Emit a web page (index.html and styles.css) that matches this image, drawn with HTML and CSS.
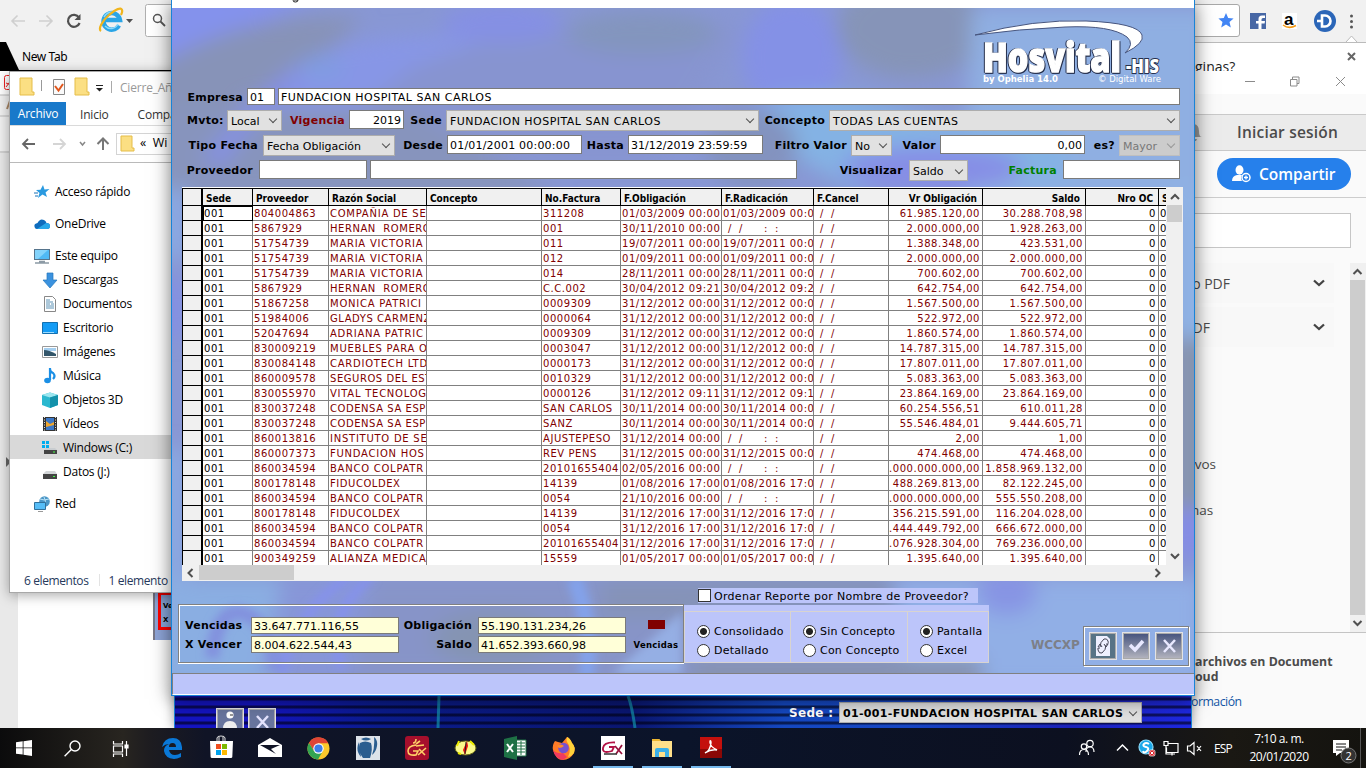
FILE: index.html
```html
<!DOCTYPE html>
<html lang="es">
<head>
<meta charset="utf-8">
<title>Escritorio</title>
<link rel="stylesheet" href="styles.css">
</head>
<body>
<div class="desktop">

  <!-- Browser behind everything -->
  <div class="browser">
    <div class="browser-bar">
      <svg class="nav-icons" width="172" height="42" viewBox="0 0 172 42" fill="none">
        <path d="M25 21H12M17.500 15.500L12 21l5.500 5.500M39 21h13M46.500 15.500L52 21l-5.500 5.500" stroke="#cfcfcf" stroke-width="1.600"/>
        <path d="M79 17.500a6 6 0 1 0 .6 5.500" stroke="#505050" stroke-width="2.200"/><path d="M80.500 14v6h-6z" fill="#505050"/>
        <path d="M119 25.500a8.300 8.300 0 1 1 1-5.500H105" stroke="#2aa5e6" stroke-width="4.500"/>
        <path d="M118 24a8 8 0 0 1-13 2M104 17q3-5 8-5" stroke="#8bd9fa" stroke-width="1.500"/>
        <path d="M101 31c-3-2 1-10 8-16s12-8 13-5c.5 1 0 3-1 5" stroke="#f0b51e" stroke-width="2.200"/>
        <path d="M126 19h7l-3.500 4z" fill="#505050"/>
        <rect x="145.500" y="4.500" width="60" height="32" rx="2" fill="#fff" stroke="#b0b0b0"/>
        <circle cx="157.500" cy="18.500" r="4" stroke="#555" stroke-width="1.500"/><path d="M160.500 21.500l4.500 4.500" stroke="#555" stroke-width="1.800"/>
      </svg>
      <svg class="ext-icons" width="171" height="42" viewBox="0 0 171 42">
        <path d="M-5 4.500H42q2.500 0 2.500 2.500v27q0 2.500-2.500 2.500H-5" fill="#fff" stroke="#a8a8a8"/>
        <path d="M31 13l2.200 5 5.400.5-4.100 3.500 1.300 5.400L31 24.500l-4.800 2.900 1.300-5.400-4.100-3.500 5.400-.5z" fill="#4285f4"/>
        <rect x="55" y="13" width="16" height="16" fill="#4767a5"/><path d="M70 18h-2q-1.500 0-1.500 1.500V21H70l-.4 2.500h-3.100V29H63.500v-5.500H61V21h2.500v-2q0-3.500 3.500-3.500h3z" fill="#fff"/>
        <rect x="87" y="13" width="15" height="16" fill="#fff"/><text x="89" y="25" class="amz">a</text><path d="M88 25q6 4.500 13 .5" stroke="#f59b15" stroke-width="1.500" fill="none"/>
        <circle cx="130" cy="21" r="11" fill="#2b66b8"/><path d="M122 21h6M127 15.500h3a5.500 5.500 0 0 1 0 11h-3z" fill="none" stroke="#fff" stroke-width="2.600"/>
        <circle cx="156.500" cy="16" r="1.500" fill="#555"/><circle cx="156.500" cy="21.500" r="1.500" fill="#555"/><circle cx="156.500" cy="27" r="1.500" fill="#555"/>
        <path d="M151 42l5.500-6 5.500 6" fill="#fff" stroke="#bbb"/>
      </svg>
    </div>
    <div class="tabstrip">
      <svg class="wedge" width="20" height="28" viewBox="0 0 20 28"><path d="M0 0h6l13 28H0z"/></svg>
      <span>New Tab</span>
    </div>
  </div>

  <!-- PDF reader -->
  <div class="reader">
    <div class="reader-left">
      <svg width="12" height="90" viewBox="0 0 12 90"><rect x="4.500" y="4.500" width="12" height="14" rx="2" fill="#fff" stroke="#e22"/><path d="M6 16q4-4 5-9M6 12l5 2" stroke="#e22" fill="none"/><path d="M0 24h12" stroke="#bbb"/><path d="M7 38l4-11" stroke="#a86" stroke-width="2"/><path d="M0 45h12M0 81h12" stroke="#bbb"/></svg>
      <i class="fold"></i>
    </div>
    <div class="reader-right">
      <div class="popup"><span>ginas?</span><svg width="10" height="10" viewBox="0 0 10 10"><path d="M1 1l7 7M8 1L1 8" stroke="#666" stroke-width="2"/></svg></div>
      <div class="caption">
        <svg width="120" height="24" viewBox="0 0 120 24" fill="none" stroke="#8b8b8b"><path d="M1 10.500h10M46.500 8.500v6.500h6.500V8.500zM48.500 8.500V6h6.500v6.500h-2M92 6l9 9M101 6l-9 9"/></svg>
      </div>
      <div class="caption-gap"></div>
      <div class="signin"><svg width="10" height="20" viewBox="0 0 10 20"><path d="M0 2q5 1 5 7t3 6H0zM0 17h3l-1 2H0z" fill="#999"/></svg><span>Iniciar sesión</span></div>
      <div class="share"><button><svg width="20" height="18" viewBox="0 0 20 18"><ellipse cx="7.500" cy="5" rx="4" ry="4.700" fill="#fff"/><path d="M0 16q0-5 5-6h5q-2 3 0 6z" fill="#fff"/><circle cx="14" cy="12.500" r="4" fill="#2680eb" stroke="#fff" stroke-width="1.500"/><path d="M14 10.500v4M12 12.500h4" stroke="#fff" stroke-width="1.300"/></svg><span>Compartir</span></button></div>
      <div class="find"></div>
      <div class="tools">
        <div class="tool-list">
          <div class="tool"><span>o PDF</span><svg width="12" height="8" viewBox="0 0 12 8"><path d="M1 1.500l5 4.500 5-4.500" fill="none" stroke="#444" stroke-width="2.300"/></svg></div>
          <div class="tool second"><span>DF</span><svg width="12" height="8" viewBox="0 0 12 8"><path d="M1 1.500l5 4.500 5-4.500" fill="none" stroke="#444" stroke-width="2.300"/></svg></div>
          <p class="frag first">vos</p><p class="frag">nas</p>
        </div>
        <div class="vbar"><svg width="15" height="17" viewBox="0 0 15 17"><path d="M3.500 11l4-4 4 4" class="arr"/></svg><i></i><svg width="15" height="17" viewBox="0 0 15 17"><path d="M3.500 6l4 4 4-4" class="arr"/></svg></div>
      </div>
      <div class="promo"><b>archivos en Document</b><b>oud</b><a>ormación</a></div>
    </div>
    <div class="stray"><div><b>Ve</b><b>X</b></div></div>
  </div>

  <!-- File explorer -->
  <div class="explorer">
    <div class="ex-title">
      <svg width="100" height="32" viewBox="0 0 100 32"><path d="M10 7h12v14h2v3H10z" fill="#fbdf83" stroke="#e5bd48"/><path d="M31.500 9v11" stroke="#999"/><path d="M43.500 8.500h11v15h-11z" fill="#fafafa" stroke="#888"/><path d="M45 15l3.500 4.500L53 13" fill="none" stroke="#e0561c" stroke-width="2"/><path d="M65 7h12v14h2v3H65z" fill="#fbdf83" stroke="#e5bd48"/><path d="M86 14.500h7" stroke="#222"/><path d="M86 17h7l-3.500 3.500z" fill="#222"/></svg>
      <i></i><span>Cierre_Añ</span>
    </div>
    <div class="ex-tabs"><b>Archivo</b><span>Inicio</span><span class="comp">Compa</span></div>
    <div class="ex-nav">
      <svg width="162" height="37" viewBox="0 0 162 37" fill="none"><path d="M25 18H13M18 13l-5 5 5 5" stroke="#666" stroke-width="1.800"/><path d="M43 18h12M50 13l5 5-5 5" stroke="#d5d5d5" stroke-width="1.800"/><path d="M70 16l2.500 3 2.500-3" stroke="#888" stroke-width="1.500"/><path d="M93 24V13M87.500 18l5.500-5.500 5.500 5.500" stroke="#777" stroke-width="2"/><rect x="106.500" y="7.500" width="90" height="21" stroke="#d4d4d4"/><path d="M111 10h11v12h2v3h-13z" fill="#fbdf83" stroke="#e5bd48"/></svg>
      <span>«&nbsp; Wi</span>
    </div>
    <div class="tree" id="tree"></div>
    <div class="ex-status"><span>6 elementos</span><i></i><span>1 elemento</span></div>
  </div>

  <!-- Parent application, only its bottom strip is visible -->
  <div class="parent-app">
    <svg class="strip-glow" width="1016" height="32" viewBox="0 0 1016 32" fill="none"><path d="M264 0l-1 32M453 0q4 10 7 32" stroke="#149bb0" stroke-width="3" opacity=".65"/></svg>
    <span class="tb"><svg width="24" height="24" viewBox="0 0 24 24"><rect width="24" height="24" fill="#68759e"/><circle cx="12" cy="5" r="3.600" fill="#fff"/><path d="M5 19q0-8 7-8t7 8z" fill="#eee"/><path d="M12 5h3" stroke="#333"/></svg></span>
    <span class="tb"><svg width="24" height="24" viewBox="0 0 24 24"><rect width="24" height="24" fill="#68759e"/><path d="M7 6l11 12M18 6L7 18" stroke="#e4e4ff" stroke-width="2.500"/></svg></span>
    <b>Sede :</b>
    <div class="select strong"><span>01-001-FUNDACION HOSPITAL SAN CARLOS</span><i class="chev"></i></div>
  </div>

  <!-- Hosvital window -->
  <div class="app">
    <div class="app-title"><svg width="140" height="8" viewBox="0 0 140 8"><path d="M121 0h5q0 2-2.500 2T121 .5" fill="none" stroke="#222"/></svg></div>
    <svg class="swirl" width="1022" height="666" viewBox="0 0 1022 666" preserveAspectRatio="none">
      <defs>
        <filter id="soft" x="-30%" y="-30%" width="160%" height="160%"><feGaussianBlur stdDeviation="10"/></filter>
        <filter id="fine" x="-30%" y="-30%" width="160%" height="160%"><feGaussianBlur stdDeviation="4"/></filter>
      </defs>
      <rect width="1022" height="666" fill="#8897d4"/>
      <g filter="url(#soft)">
        <path d="M-20 -20h180L-20 70z" fill="#8492ec"/>
        <path d="M-20 60Q80 0 190 10l-60 60Q40 90-20 190z" fill="#8793b8"/>
        <path d="M120 60q60-40 200-30l-60 70-180 40z" fill="#8796e6"/>
        <path d="M240 60q200-80 330-40l-80 130H130z" fill="#8794d0"/>
        <path d="M-10 100h250l150 90H-10z" fill="#8794bd"/>
        <path d="M30 150q60-70 90-90l10 20q-50 30-80 80z" fill="#8590e4"/>
        <ellipse cx="150" cy="60" rx="24" ry="12" fill="#809be2"/>
        <ellipse cx="330" cy="15" rx="60" ry="20" fill="#8590e4"/>
        <ellipse cx="470" cy="25" rx="75" ry="22" fill="#8395be"/>
        <ellipse cx="620" cy="50" rx="50" ry="60" fill="#8491e6"/>
        <ellipse cx="740" cy="20" rx="75" ry="50" fill="#8694b8"/>
        <path d="M800 0h240v200H790z" fill="#8fafe2"/>
        <path d="M550 110q80-40 180-10t150 0l20 70-220 10z" fill="#84b2e4"/>
        <ellipse cx="580" cy="140" rx="45" ry="40" fill="#8393bf"/>
        <ellipse cx="760" cy="160" rx="90" ry="22" fill="#868ee6"/>
        <path d="M1000 180h40v150h-40z" fill="#8fb2e4"/>
        <path d="M1000 330h40v190h-40z" fill="#8794af"/>
        <path d="M1000 500h40v50h-40z" fill="#858de4"/>
        <path d="M-15 180h30v70h-30zM-15 440h30v130h-30z" fill="#8aa9e2"/>
        <path d="M-15 270h30v60h-30z" fill="#8490e2"/>
        <path d="M-15 570h130v110H-15z" fill="#8aaee2"/>
        <path d="M110 570h100v100H90z" fill="#8796d8"/>
        <path d="M200 570h320v100H180z" fill="#8794c8"/>
        <path d="M430 570h320v40H430z" fill="#8593b8"/>
        <ellipse cx="320" cy="630" rx="60" ry="26" fill="#8594b2"/>
        <path d="M720 570h310v110H740z" fill="#91afe6"/>
        <ellipse cx="835" cy="585" rx="30" ry="22" fill="#8794e4"/>
        <path d="M520 650h290v30H520z" fill="#8693b0"/>
      </g>
      <g filter="url(#fine)" fill="none">
        <path d="M110 666q10-60 70-100M170 660q-20-50 30-92" stroke="#8591ee" stroke-width="8"/>
        <path d="M402 570q20 50 12 100" stroke="#83a2ea" stroke-width="16"/>
        <path d="M40 650q5-50 30-45t35 55" stroke="#8291de" stroke-width="14"/>
        <path d="M440 666l70-62v62z" fill="#95afe4"/>
      </g>
    </svg>
    <div class="app-body">
      <div class="brand">
        <svg width="196" height="72" viewBox="0 0 196 72">
          <path d="M1 22Q60 6 112 8t56 14q3 8-17 18 10-9 2-16-16-12-62-10T1 22z" fill="#fff" stroke="#47557e" stroke-width="1"/>
          <text x="9" y="59" class="logo" textLength="138" lengthAdjust="spacingAndGlyphs">Hosvital</text>
          <text x="152" y="60" class="his" textLength="33" lengthAdjust="spacingAndGlyphs">-HIS</text>
          <text x="9" y="69" class="tiny" textLength="75" lengthAdjust="spacingAndGlyphs">by Ophelia 14.0</text>
          <text x="124" y="69" class="tiny thin" textLength="63" lengthAdjust="spacingAndGlyphs">© Digital Ware</text>
        </svg>
      </div>
      <div class="row r1"><label>Empresa</label><div class="in">01</div><div class="in up">FUNDACION HOSPITAL SAN CARLOS</div></div>
      <div class="row r2"><label>Mvto:</label><div class="select"><span>Local</span><i class="chev"></i></div><label class="red">Vigencia</label><div class="in num">2019</div><label>Sede</label><div class="select up"><span>FUNDACION HOSPITAL SAN CARLOS</span><i class="chev"></i></div><label>Concepto</label><div class="select up"><span>TODAS LAS CUENTAS</span><i class="chev"></i></div></div>
      <div class="row r3"><label>Tipo Fecha</label><div class="select"><span>Fecha Obligación</span><i class="chev"></i></div><label>Desde</label><div class="in date">01/01/2001 00:00:00</div><label>Hasta</label><div class="in">31/12/2019 23:59:59</div><label>Filtro Valor</label><div class="select"><span>No</span><i class="chev"></i></div><label>Valor</label><div class="in num">0,00</div><label>es?</label><div class="select off"><span>Mayor</span><i class="chev"></i></div></div>
      <div class="row r4"><label>Proveedor</label><div class="in"></div><div class="in"></div><label>Visualizar</label><div class="select"><span>Saldo</span><i class="chev"></i></div><label class="green">Factura</label><div class="in"></div></div>

      <div class="gridbox">
        <div class="grid-main">
          <div class="sheet" id="sheet"></div>
          <div class="vscroll"><svg width="16" height="17" viewBox="0 0 16 17"><path d="M4 11l4-4 4 4" class="arr"/></svg><i></i><svg width="16" height="17" viewBox="0 0 16 17"><path d="M4 6l4 4 4-4" class="arr"/></svg></div>
        </div>
        <div class="hscroll"><svg width="17" height="16" viewBox="0 0 17 16"><path d="M10.500 4l-4 4 4 4" class="arr"/></svg><i></i><svg width="17" height="16" viewBox="0 0 17 16"><path d="M6.500 4l4 4-4 4" class="arr"/></svg></div>
      </div>

      <div class="check"><i></i><span>Ordenar Reporte por Nombre de Proveedor?</span></div>
      <div class="foot">
        <div class="totals">
          <label>Vencidas</label><div class="in">33.647.771.116,55</div><label class="r">Obligación</label><div class="in">55.190.131.234,26</div><i class="swatch"></i>
          <label>X Vencer</label><div class="in">8.004.622.544,43</div><label class="r">Saldo</label><div class="in">41.652.393.660,98</div><small>Vencidas</small>
        </div>
        <div class="opts">
          <div><span><i class="on"></i>Consolidado</span><span><i></i>Detallado</span></div>
          <div><span><i class="on"></i>Sin Concepto</span><span><i></i>Con Concepto</span></div>
          <div><span><i class="on"></i>Pantalla</span><span><i></i>Excel</span></div>
        </div>
        <b class="code">WCCXP</b>
        <div class="actions">
          <span class="tb"><svg width="24" height="24" viewBox="0 0 24 24"><rect width="24" height="24" fill="#577386"/><path d="M5 2h11l3 3v17H5z" fill="#eef0ff"/><path d="M9 14q-3-1-2 2 1 4 4 3 4-3 4-8M15 10q3 1 2-3-1-3-4-2-4 3-4 8M7 13l2-3 2 3M13 10l2 3 2-3" fill="none" stroke="#445"/></svg></span>
          <span class="tb"><svg width="24" height="24" viewBox="0 0 24 24"><defs><linearGradient id="g" x2="0" y2="1"><stop offset="0" stop-color="#48557f"/><stop offset="1" stop-color="#b1b2bd"/></linearGradient></defs><rect width="24" height="24" fill="url(#g)"/><path d="M6 11l5 5 8-9" fill="none" stroke="#e8e8ff" stroke-width="3.500"/></svg></span>
          <span class="tb"><svg width="24" height="24" viewBox="0 0 24 24"><rect width="24" height="24" fill="url(#g)"/><path d="M7 6l11 12M18 6L7 18" stroke="#e8e8ff" stroke-width="2.500"/></svg></span>
        </div>
      </div>
      <div class="statusbar"></div>
    </div>
  </div>

  <!-- Taskbar -->
  <div class="taskbar">
    <div class="launch">
      <span class="w48"><svg width="16" height="16" viewBox="0 0 16 16" fill="#fff"><path d="M0 2.300l6.700-1v6.200H0zM7.500 1.200L16 0v7.500H7.500zM0 8.300h6.700v6.300L0 13.700zM7.500 8.300H16V16l-8.500-1.200z"/></svg></span>
      <span class="w48"><svg width="17" height="17" viewBox="0 0 17 17" fill="none" stroke="#fff" stroke-width="1.400"><circle cx="11" cy="6" r="5"/><path d="M7.300 9.500L.6 16.300"/></svg></span>
      <span class="w48 gap"><svg width="17" height="17" viewBox="0 0 17 17" fill="none" stroke="#fff" stroke-width="1.200"><path d="M1.500 1v3h9V1M1.500 6h9v6h-9zM1.500 17v-3h9v3M14.500 1v15"/><path d="M13 5h3v3h-3z" fill="#fff"/></svg></span>
      <span><svg width="22" height="22" viewBox="0 0 22 22"><path d="M1 10Q3 1 12 1q8 0 9 9v3H8q1 5 6 5 3 0 6-2v4q-4 2-7 2-9-1-10-8-.3-5 5-7-4 0-7 3zm7 0h7q0-4-3.500-4T8 10z" fill="#0a78d7"/></svg></span>
      <span class="up1"><svg width="24" height="24" viewBox="0 0 24 24"><path d="M8 7V3q0-2 4-2t4 2v4M10 6V2M14 6V2" fill="none" stroke="#ddd"/><path d="M1 6h23l-.7 16q0 1-1.500 1H3q-1.300 0-1.400-1z" fill="#fff"/><path d="M7 9h5v5H7z" fill="#f04e1f"/><path d="M13 9h5v5h-5z" fill="#7cb900"/><path d="M7 15h5v5H7z" fill="#00a3ee"/><path d="M13 15h5v5h-5z" fill="#fdb800"/></svg></span>
      <span><svg width="24" height="20" viewBox="0 0 24 20"><path d="M0 7l12-7 12 7v12H0z" fill="#fff"/><path d="M2 7h20l-9 4 5 5L2 7z" fill="#101426"/></svg></span>
      <span><svg width="23" height="23" viewBox="0 0 23 23"><circle cx="11.500" cy="11.500" r="11" fill="#fbc92c"/><path d="M1.900 6A11 11 0 0 1 21.300 6.200L11.500 6.300 7 14z" fill="#e04435"/><path d="M1.900 6A11 11 0 0 0 11 22.500l4.800-8.500H7z" fill="#33a452"/><circle cx="11.500" cy="11.500" r="5.200" fill="#fff"/><circle cx="11.500" cy="11.500" r="4.100" fill="#3e7de8"/></svg></span>
      <span><svg width="24" height="24" viewBox="0 0 24 24"><path d="M0 0h24v24H0z" fill="#dde3ea"/><path d="M4 7q5-3 11 0 2 6-1 15H7Q1 15 4 7z" fill="#2b5d8f"/><path d="M5 3q5-3 10 0-5 3-10 0M18 1q4 3 3 9t-5 9q3-8 2-18M3 6Q-1 14 5 21" fill="#2b5d8f"/></svg></span>
      <span><svg width="24" height="24" viewBox="0 0 24 24"><rect width="24" height="24" rx="3" fill="#a60f2c"/><path d="M11 9q-8 1-8 6t8 4l2-4H8M14 13l6 6M21 12l-8 7M8 7q3 0 3-4M11 8l4-3M11 10l8-1" fill="none" stroke="#ffd067" stroke-width="1.600"/></svg></span>
      <span><svg width="23" height="20" viewBox="0 0 23 20"><ellipse cx="11.500" cy="10" rx="10.500" ry="7" fill="#fafa8b" stroke="#686818"/><path d="M5 3L3 8M16 3l4 4M4 15l3 1" stroke="#ecec00" stroke-width="2"/><path d="M13 3l1 5-3 9-2-5z" fill="#e11"/><path d="M12 4l-1 12" stroke="#222"/></svg></span>
      <span><svg width="24" height="24" viewBox="0 0 24 24"><path d="M11 4h12v16H11z" fill="#fff" stroke="#1e7145"/><path d="M14 7h8M14 10h8M14 13h8M14 16h8M18 5v14" stroke="#1e7145"/><path d="M1 3l13-3v24L1 21z" fill="#1e7145"/><path d="M4 8l6 8M10 8l-6 8" stroke="#fff" stroke-width="2"/></svg></span>
      <span><svg width="24" height="24" viewBox="0 0 24 24"><path d="M3 5l3 1 4 1 5-6q3 1 5 6 4 4 2 10-4 7-11 7T1 14Q0 9 3 5z" fill="#ff7b27"/><path d="M15 1q3 1 5 6 4 4 2 10-2 3-6 4 4-9-1-15-1-2 0-5z" fill="#ffd23a"/><path d="M1 14q4 4 10 3l4 4-4 3Q3 23 1 14z" fill="#f23a5e"/><circle cx="11.500" cy="12" r="5.300" fill="#7651cf"/><path d="M5 10q4-3 7 0-2 2-5 2z" fill="#ff8a27"/></svg></span>
      <span class="run"><svg width="24" height="24" viewBox="0 0 24 24"><rect width="24" height="24" fill="#fff"/><path d="M14 6.500Q3 6 2 12t9 3l2-4H8" fill="none" stroke="#b21245" stroke-width="1.800"/><path d="M14 10l7 8M21 9l-6 9" stroke="#97123d" stroke-width="1.700"/><path d="M3 18h13" stroke="#333" stroke-width="1.500"/></svg></span>
      <span class="run"><svg width="22" height="20" viewBox="0 0 22 20"><path d="M1 1h7l2 2h11v16H1z" fill="#ffe08a"/><path d="M1 1h7l2 2H1z" fill="#edb62f"/><path d="M4 19v-7q0-2 2-2h10q2 0 2 2v7h-4v-5H8v5z" fill="#3cb0e8"/></svg></span>
      <span class="run up1"><svg width="22" height="21" viewBox="0 0 22 21"><path d="M0 0h22v21H0z" fill="#c4100d"/><path d="M0 12h22v9H0z" fill="#8b0806"/><path d="M5 16q5-2 6-10 0-3-1-2-1 5 7 9-6-1-12 3" fill="none" stroke="#fff" stroke-width="1.400"/></svg></span>
    </div>
    <div class="tray">
      <svg width="132" height="40" viewBox="3 0 132 40" fill="none" stroke="#fff" stroke-width="1.200"><circle cx="20" cy="15.500" r="3.200"/><path d="M16 24q0-5 4-5t4 5"/><circle cx="14" cy="18.500" r="2.700" fill="#0d1020"/><path d="M9.500 27q0-5.500 4.500-5.500t4.500 5.500"/><path d="M47 22.500l5.500-5.500 5.500 5.500" stroke-width="1.500"/><circle cx="76" cy="19" r="7" fill="#1aa8ea" stroke="#8cdcfc"/><path d="M79 16q-3-2-5 0t2 3 1 4-4 0" stroke-width="2"/><rect x="79" y="22" width="6" height="6" rx="1.500" fill="#d9242b" stroke="#fff" stroke-width=".7"/><path d="M80.500 23.500l3 3M83.500 23.500l-3 3" stroke-width="1"/><path d="M98 15.500h10v9H96.500v-5M94 13.500h4v4h-4zM96 18v8h9M102 25v2.500"/><path d="M117.500 18v5h2.500l4 3.500v-12L120 18zM127 18l4 5M131 18l-4 5"/></svg>
      <span class="lang">ESP</span>
      <div class="clock"><span>7:10 a. m.</span><span>20/01/2020</span></div>
      <svg width="28" height="40" viewBox="0 0 28 40"><path d="M3 12h16v13H10l-4 3v-3H3z" fill="#fff"/><path d="M6 16h10M6 19h10M6 22h6" stroke="#111"/><circle cx="18.500" cy="27.500" r="7.500" fill="#333" stroke="#777"/><text x="15.500" y="31.500" class="badge">2</text></svg>
      <i class="peek"></i>
    </div>
  </div>
</div>
<script src="app.js"></script>
</body>
</html>
```

FILE: styles.css
```css
* { box-sizing: border-box; }
body { margin: 0; font-family: "DejaVu Sans", sans-serif; font-size: 11px; color: #000; overflow: hidden; }
.desktop { position: relative; width: 1366px; height: 768px; overflow: hidden; background: #fff; }
svg { display: block; flex: none; }
.arr { fill: none; stroke: #505050; stroke-width: 2; }

/* browser */
.browser { position: absolute; left: 0; top: 0; width: 1366px; height: 71px; background: #f1f1f1; border-bottom: 1px solid #000; }
.browser-bar { display: flex; justify-content: space-between; height: 42px; }
.amz { font: bold 17px "Liberation Sans", sans-serif; }
.tabstrip { display: flex; height: 28px; align-items: center; font: 12px "Noto Sans", sans-serif; gap: 2px; }
.tabstrip span { padding-top: 1px; letter-spacing: -.4px; }

/* reader */
.reader { position: absolute; left: 0; top: 71px; width: 1366px; height: 657px; display: flex; justify-content: space-between; background: #fff; }
.reader-left { width: 18px; background: linear-gradient(#fff 0 24px, #f1f1f1 24px 80px, #e9e9e9 80px); display: flex; flex-direction: column; }
.fold { border: 5px solid transparent; border-left-color: #666; width: 0; margin: 296px 0 0 6px; }
.reader-right { width: 175px; background: #fafafa; margin-top: -29px; display: flex; flex-direction: column; font-family: "Open Sans", sans-serif; color: #4b4b4b; }
.popup { height: 29px; background: #fff; border-top: 1px solid #bbb; display: flex; justify-content: space-between; padding: 9px 9px 0 4px; overflow: hidden; color: #222; font-size: 14px; line-height: 32px; }
.popup span { margin-top: -1px; }
.caption { height: 23px; background: #fff; display: flex; padding-left: 53px; }
.caption svg { overflow: visible; }
.caption-gap { height: 20px; }
.signin { height: 37px; border: solid #c9c9c9; border-width: 1px 0; background: #ebebeb; display: flex; align-items: center; gap: 33px; padding: 0 0 1px 3px; font-size: 15.5px; font-weight: 600; letter-spacing: .2px; }
.share { height: 47px; border-bottom: 1px solid #cdcdcd; padding: 7px 0 0 26px; }
.share button { width: 134px; height: 32px; border: 0; border-radius: 16px; background: #2680eb; color: #fff; font: 600 15.5px "Open Sans", sans-serif; display: flex; align-items: center; gap: 7px; padding: 0 0 1px 15px; }
.find { height: 35px; width: 160px; margin: 15px 0; border: 1px solid #c6c6c6; background: #fff; }
.tools { height: 370px; display: flex; justify-content: space-between; border-bottom: 1px solid #c4c4c4; }
.tool-list { width: 143px; }
.tool { height: 40px; background: #f8f8f8; display: flex; align-items: center; justify-content: space-between; padding: 0 9px 0 0; font-size: 14px; }
.tool span { width: 39px; text-align: right; }
.tool.second { margin-top: 4px; } .tool.second span { width: 19px; }
.frag { margin: 26px 0 0; width: 25px; text-align: right; font-size: 13.500px; line-height: 20px; }
.frag:last-child { width: 21px; }
.frag.first { margin-top: 107px; }
.vbar { width: 16px; background: #f0f0f0; display: flex; flex-direction: column; justify-content: space-between; }
.vbar i { flex: 1; background: #cdcdcd; width: 15px; }
.promo { display: flex; flex-direction: column; font-size: 12.300px; line-height: 15px; padding: 21px 0 0 4px; letter-spacing: 0; }
.promo a { color: #1355a5; margin: 10px 0 0 -4px; letter-spacing: -.5px; }
.promo b { white-space: nowrap; font-weight: 700; }
.stray { position: absolute; left: 153px; top: 515px; width: 30px; height: 54px; background: #8ea5d8; border-left: 2px solid #778; padding: 6px 0 6px 3px; }
.stray div { height: 38px; border: 3px solid #f00; background: #88a7dc; font-size: 7px; line-height: 14px; padding: 4px 0 0 2px; }
.stray b { display: block; }

/* explorer */
.explorer { position: absolute; left: 9px; top: 71px; width: 400px; height: 522px; background: #fff; border: 1px solid #a8a8a8; box-shadow: 0 2px 12px rgba(0,0,0,.35); font-family: "Open Sans", sans-serif; font-size: 12px; display: flex; flex-direction: column; }
.ex-title { height: 30px; display: flex; align-items: center; color: #999; }
.ex-title i { width: 1px; height: 12px; background: #aaa; margin-left: 1px; }
.ex-title span { margin-left: 8px; letter-spacing: -.2px; }
.ex-tabs { height: 24px; display: flex; align-items: center; border-bottom: 1px solid #dadada; color: #333; letter-spacing: -.2px; }
.ex-tabs b { width: 56px; height: 23px; background: #1979ca; color: #fff; font-weight: 400; line-height: 24px; text-align: center; }
.ex-tabs span { margin-left: 14px; padding-top: 1px; } .ex-tabs .comp { margin-left: 29px; }
.ex-nav { height: 37px; display: flex; align-items: center; position: relative; border-bottom: 1px solid #bababa; }
.ex-nav span { position: absolute; left: 130px; top: 8px; font-size: 12.500px; }
.tree { padding-top: 17px; height: 398px; }
.tree div { height: 24px; display: flex; align-items: center; gap: 5px; padding: 0 0 1px 32px; letter-spacing: -.25px; }
.tree .top { padding-left: 24px; margin-bottom: 8px; }
.tree .flush { margin-bottom: 0; } .tree .last { margin-top: 8px; }
.tree .sel { background: #d9d9d9; margin-top: -1px; height: 24px; padding-bottom: 0; margin-bottom: 1px; }
.ex-status { height: 30px; display: flex; align-items: center; padding: 8px 0 0 14px; color: #26395c; letter-spacing: -.4px; font-size: 12px; }
.ex-status i { width: 1px; height: 12px; background: #e3e3e3; margin: 0 9px 0 10px; }

/* parent app strip */
.parent-app { position: absolute; left: 174px; top: 690px; width: 1018px; height: 38px; border: solid #1883d7; border-width: 0 1px; background: repeating-linear-gradient(rgba(0,0,15,.6) 0 2px, transparent 3px 7px, rgba(0,0,15,.6) 8px), linear-gradient(90deg, #1414c0 0 8%, #0b1c8c 20%, #0a1670 45%, #1548c0 60%, #1646c4 72%, #1b22b8 88%, #1e28e0); display: flex; padding: 12px 0 0 41px; color: #fff; box-shadow: 0 0 12px rgba(0,0,0,.4); }
.strip-glow { position: absolute; left: 0; top: 6px; }
.tb { width: 28px; height: 28px; border: 2px solid #e2e2e6; outline: 1px solid #aaa; outline-offset: -2px; flex: none; }
.parent-app .tb { margin: 6px 4px 0 0; position: relative; }
.parent-app b { font-size: 12px; margin: 4px 0 0 509px; width: 50px; letter-spacing: .3px; }
.select.strong { width: 303px; height: 21px; font-weight: bold; color: #000; font-size: 11px; letter-spacing: .33px; }

/* application */
.app { position: absolute; left: 171px; top: 0; width: 1024px; height: 696px; border: 1px solid #1883d7; border-top: 0; box-shadow: 0 3px 18px rgba(0,0,0,.55); background: #8897d4; }
.app-title { height: 8px; background: #fff; }
.swirl { position: absolute; left: 0; top: 8px; }
.app-body { position: relative; display: flex; flex-direction: column; height: 687px; }
.brand { height: 80px; display: flex; justify-content: flex-end; padding: 5px 24px 0 0; }
.logo { font: 800 41px "Open Sans", "DejaVu Sans", sans-serif; fill: #fff; stroke: #fff; stroke-width: 1.5; filter: drop-shadow(1px 1px 0 #26304d) drop-shadow(-1px 0 0 #26304d); }
.his { font: 800 20px "Open Sans", sans-serif; fill: #fff; stroke: #26304d; stroke-width: 2; paint-order: stroke; }
.tiny { font: bold 8px "DejaVu Sans", sans-serif; fill: #fff; } .tiny.thin { font-weight: 400; }

.row { display: grid; align-items: start; width: 1008px; }
.row label { text-align: right; padding-right: 4px; white-space: nowrap; }
label { font-weight: bold; font-size: 11px; letter-spacing: .26px; }
.r1 { grid-template-columns: 60px 28px 905px; height: 22px; padding-left: 15px; }
.r1 .in { height: 17px; line-height: 17px; } .r1 .in:last-child { margin-left: 3px; width: 902px; }
.row.r1 label { line-height: 19px; }
.r2 { grid-template-columns: 40px 55px 67px 55px 42px 313px 70px 351px; height: 25px; padding-left: 15px; }
.r3 { grid-template-columns: 76px 132px 52px 135px 46px 135px 88px 41px 48px 145px 34px 61px; height: 26px; padding-left: 15px; }
.r4 { grid-template-columns: 74px 108px 430px 112px 59px 95px 117px; height: 27px; padding-left: 13px; }
.r4 .in:nth-child(3) { margin-left: 3px; }
.row.r2 label, .row.r3 label { line-height: 21px; }
.row.r4 label { line-height: 22px; padding-right: 6px; }
.row.r2 label:first-child, .row.r3 label:first-child { padding-right: 5px; }
.in { height: 19px; background: #fff; border: 1px solid #7a7a7a; padding: 0 2px; line-height: 19px; white-space: nowrap; overflow: hidden; font-size: 11px; }
.date { letter-spacing: .2px; }
.up { letter-spacing: .48px; }
.num { text-align: right; }
.select { height: 21px; background: #e1e1e1; border: 1px solid #adadad; display: flex; align-items: center; justify-content: space-between; padding: 2px 5px 0 3px; white-space: nowrap; }
.chev { width: 6px; height: 6px; border: solid #505050; border-width: 0 1px 1px 0; transform: translateY(-2px) rotate(45deg); flex: none; }
.off { background: #ccc; border-color: #bfbfbf; color: #787878; } .off .chev { border-color: #999; }
.red { color: #800000; } .green { color: #008000; }

.gridbox { width: 1001px; margin-left: 10px; height: 394px; background: #f0f0f0; }
.grid-main { display: flex; justify-content: space-between; height: 378px; }
.sheet { width: 984px; height: 378px; overflow: hidden; background: #fff; border-top: 1px solid #fff; }
.tr { display: grid; grid-template-columns: 21px 50px 76px 98px 115px 79px 101px 92px 75px 94px 103px 73px 8px; height: 15px; color: #800000; font-size: 10px; letter-spacing: .55px; line-height: 15px; }
.tr div { border-right: 1px solid #808080; border-bottom: 1px solid #808080; padding-left: 1px; white-space: pre; overflow: hidden; }
.tr div:first-child { background: #f0f0f0; border: solid #000; border-width: 0 2px 1px 1px; }
.tr div.k { color: #000; }
.tr div.name { letter-spacing: .75px; }
.tr div.nil { word-spacing: 3.300px; padding-left: 6px; }
.tr div.n { display: flex; justify-content: flex-end; padding-right: 2px; }
.tr div:last-child { border-right: 0; }
.tr div.focus { border: 1px solid #000; outline: 1px solid #000; outline-offset: -1px; line-height: 13px; padding-left: 0; }
.tr.th { height: 18px; color: #000; font: bold 10px/19px "DejaVu Sans Condensed", "DejaVu Sans", sans-serif; letter-spacing: 0; border-top: 1px solid #000; }
.tr.th div { background: #f0f0f0; border-color: #000; border-bottom-width: 1px; padding-left: 3px; }
.tr.th div.n { padding-right: 5px; }
.vscroll { width: 16px; display: flex; flex-direction: column; padding-top: 1px; }
.vscroll i { height: 17px; width: 15px; background: #cdcdcd; margin-bottom: auto; }
.hscroll { display: flex; height: 16px; }
.hscroll i { width: 95px; height: 15px; background: #cdcdcd; margin-right: auto; }
.hscroll svg:last-child { margin-right: 17px; }

.check { width: 280px; height: 15px; margin: 7px 0 0 526px; background: #bcc5fa; display: flex; gap: 3px; line-height: 18px; letter-spacing: .3px; }
.check i { width: 13px; height: 13px; margin-top: 1px; background: #fff; border: 1px solid #333; }
.foot { display: flex; margin: 1px 0 0 6px; height: 69px; }
.totals { width: 506px; height: 59px; border: 1px solid #808080; box-shadow: inset 1px 1px #fff, 0 1px #fff; display: grid; grid-template-columns: 66px 148px 79px 148px 59px; grid-auto-rows: 19px; align-content: start; padding: 12px 0 0 6px; }
.totals .in { height: 17px; background: #ffffd8; line-height: 17px; }
.totals label { line-height: 18px; }
.r { text-align: right; padding-right: 6px; }
.swatch { width: 17px; height: 9px; background: #800000; margin: 3px 0 0 22px; }
.totals small { font-size: 8.500px; font-weight: bold; text-align: center; line-height: 18px; padding-left: 1px; letter-spacing: .25px; }
.opts { width: 305px; height: 58px; margin-top: 1px; background: #bcc5fa; padding-top: 6px; display: grid; grid-template-columns: 107px 117px 81px; letter-spacing: .2px; }
.opts div { border: 1px solid #d8d4d0; border-left-width: 0; padding: 10px 0 0 12px; }
.opts div:first-child { border-left-width: 1px; }
.opts span { display: flex; align-items: center; gap: 4px; height: 19px; white-space: nowrap; line-height: 19px; }
.opts i { width: 13px; height: 13px; border-radius: 50%; border: 1px solid #333; background: #fff; flex: none; }
.opts i.on { background: radial-gradient(circle, #222 0 3px, #fff 4px); }
.code { color: #7c7f88; font-size: 12px; margin: 34px 2px 0 42px; width: 50px; }
.actions { width: 106px; height: 40px; margin-top: 22px; border: 1px solid #808080; box-shadow: inset 1px 1px #fff, 1px 1px #fff; display: flex; gap: 5px; padding: 5px; }
.statusbar { height: 22px; background: #bcc5fa; border: solid #808080; border-width: 1px 0 0 1px; border-bottom: 1px solid #fff; }

/* taskbar */
.taskbar { position: absolute; left: 0; top: 728px; width: 1366px; height: 40px; background: linear-gradient(90deg, #0b0b0c, #282520 9%, #1d1c20 11%, #101426 15%, #0b142a 50%, #0c1020 78%, #1a1813 90%, #14130f); display: flex; justify-content: space-between; color: #fff; font: 12px "Open Sans", sans-serif; }
.launch, .tray { display: flex; }
.launch span { width: 49px; height: 40px; display: flex; align-items: center; justify-content: center; }
.launch .up1 { padding-bottom: 2px; }
.launch .w48 { width: 48px; } .launch .gap { margin-right: 3px; }
.launch .run { background: linear-gradient(#76b9ed, #76b9ed) 50% 100% / 40px 2px no-repeat; }
.tray { width: 293px; align-items: center; }
.lang { width: 30px; padding-left: 9px; font-size: 12px; letter-spacing: -.9px; }
.clock { width: 82px; margin-left: 2px; text-align: center; display: flex; flex-direction: column; line-height: 18px; font-size: 12px; letter-spacing: -.45px; padding-left: 2px; padding-bottom: 1px; }
.clock span { white-space: nowrap; }
.tray .clock + svg { margin-left: 11px; }
.badge { font: 11px "Open Sans", sans-serif; fill: #fff; }
.peek { width: 1px; height: 40px; background: #555; margin-left: 2px; }
```

FILE: app.js
```js
const head = ["", "Sede", "Proveedor", "Razón Social", "Concepto", "No.Factura", "F.Obligación", "F.Radicación", "F.Cancel", "Vr Obligación", "Saldo", "Nro OC", "S"];
const rows = `804004863|COMPAÑIA DE SE|311208|01/03/2009 00:00|01/03/2009 00:0|61.985.120,00|30.288.708,98
5867929|HERNAN  ROMERO|001|30/11/2010 00:00||2.000.000,00|1.928.263,00
51754739|MARIA VICTORIA|011|19/07/2011 00:00|19/07/2011 00:0|1.388.348,00|423.531,00
51754739|MARIA VICTORIA|012|01/09/2011 00:00|01/09/2011 00:0|2.000.000,00|2.000.000,00
51754739|MARIA VICTORIA|014|28/11/2011 00:00|28/11/2011 00:0|700.602,00|700.602,00
5867929|HERNAN  ROMERO|C.C.002|30/04/2012 09:21|30/04/2012 09:2|642.754,00|642.754,00
51867258|MONICA PATRICI|0009309|31/12/2012 00:00|31/12/2012 00:0|1.567.500,00|1.567.500,00
51984006|GLADYS CARMENZ|0000064|31/12/2012 00:00|31/12/2012 00:0|522.972,00|522.972,00
52047694|ADRIANA PATRIC|0009309|31/12/2012 00:00|31/12/2012 00:0|1.860.574,00|1.860.574,00
830009219|MUEBLES PARA O|0003047|31/12/2012 00:00|31/12/2012 00:0|14.787.315,00|14.787.315,00
830084148|CARDIOTECH LTD|0000173|31/12/2012 00:00|31/12/2012 00:0|17.807.011,00|17.807.011,00
860009578|SEGUROS DEL EST|0010329|31/12/2012 00:00|31/12/2012 00:0|5.083.363,00|5.083.363,00
830055970|VITAL TECNOLOG|0000126|31/12/2012 09:11|31/12/2012 09:1|23.864.169,00|23.864.169,00
830037248|CODENSA SA ESP|SAN CARLOS|30/11/2014 00:00|30/11/2014 00:0|60.254.556,51|610.011,28
830037248|CODENSA SA ESP|SANZ|30/11/2014 00:00|30/11/2014 00:0|55.546.484,01|9.444.605,71
860013816|INSTITUTO DE SE|AJUSTEPESO|31/12/2014 00:00||2,00|1,00
860007373|FUNDACION HOS|REV PENS|31/12/2015 00:00|31/12/2015 00:0|474.468,00|474.468,00
860034594|BANCO COLPATR|20101655404|02/05/2016 00:00||5.000.000.000,00|1.858.969.132,00
800178148|FIDUCOLDEX|14139|01/08/2016 17:00|01/08/2016 17:0|488.269.813,00|82.122.245,00
860034594|BANCO COLPATR|0054|21/10/2016 00:00||3.000.000.000,00|555.550.208,00
800178148|FIDUCOLDEX|14139|31/12/2016 17:00|31/12/2016 17:0|356.215.591,00|116.204.028,00
860034594|BANCO COLPATR|0054|31/12/2016 17:00|31/12/2016 17:0|2.444.449.792,00|666.672.000,00
860034594|BANCO COLPATR|20101655404|31/12/2016 17:00|31/12/2016 17:0|3.076.928.304,00|769.236.000,00
900349259|ALIANZA MEDICA|15559|01/05/2017 00:00|01/05/2017 00:0|1.395.640,00|1.395.640,00`.split("\n").map(r => r.split("|"));

const tight = /^(FIDUC|CODENSA|HERNAN|GLADYS|SEGUROS)/;
const cell = (t, c = "") => `<div class="${c}">${t}</div>`;
let html = '<div class="tr th">' + head.map((t, i) => cell(t, i > 8 && i < 12 ? "n" : "")).join("") + "</div>";
rows.forEach((r, i) => {
  html += '<div class="tr">' + cell("") + cell("001", i ? "k" : "k focus") + cell(r[0]) + cell(r[1], tight.test(r[1]) ? "" : "name") + cell("") + cell(r[2]) + cell(r[3]) +
    (r[4] ? cell(r[4]) : cell("/ /   : :", "nil")) + cell("/ /", "nil") + cell(r[5], "n") + cell(r[6], "n") + cell("0", "n k") + cell(i === rows.length - 1 ? "" : "0", "k") + "</div>";
});
document.getElementById("sheet").innerHTML = html;

const icons = {
  star: '<path d="M9 1l1.500 4.500 5-.5-4 3.500L13 13 8.500 10.500 4 14l1.500-5L2 6l4.500-.3z" fill="#2a9ae0"/><path d="M0 9h4M1 12h3" stroke="#1671b8"/>',
  cloud: '<path d="M1 12q-2-4 2.500-5Q6 2 10 4q2 1 2.500 3Q16 7 16 10t-3 3H3q-1.500 0-2-1z" fill="#0f6cbd"/><path d="M3 13l9-6q4 0 4 3t-3 3z" fill="#28a8ea"/>',
  pc: '<rect x=".5" y="1.500" width="15" height="10" fill="#4fb9f5" stroke="#56748c"/><path d="M1 2h13L4 11H1z" fill="#83d3fb"/><path d="M5 13.500h6M1 15h14" stroke="#8c9aa5" stroke-width="1.300"/>',
  down: '<path d="M5 1h6v7h4l-7 8-7-8h4z" fill="#3b92df" stroke="#2377bb" stroke-width=".7"/>',
  doc: '<path d="M2.500.5h8l3 3v12h-11z" fill="#fff" stroke="#888"/><path d="M4 4h4M4 6h7M9 8h3M4 8h4M4 10h8M4 12h8" stroke="#5c92b5"/>',
  desk: '<path d="M.5 2.500h15v11H.5z" fill="#159cf5" stroke="#1370b0"/><path d="M1 12.500h11" stroke="#9bdcff"/>',
  img: '<path d="M.5 2.500h15v11H.5z" fill="#fff" stroke="#999"/><path d="M2 4h12v3H2z" fill="#a5cff0"/><path d="M2 6q5 0 12 4v2H2z" fill="#33566a"/>',
  music: '<path d="M8 0v12M8 1q0 3 3 4 3 3 0 6" fill="none" stroke="#1b8fe5" stroke-width="2.200"/><ellipse cx="5.500" cy="12.500" rx="3.300" ry="2.800" fill="#1b8fe5"/>',
  cube: '<path d="M0 3l8-2.500L16 3v10l-8 3-8-3z" fill="#2bb8cf"/><path d="M0 3l8-2.500L16 3 8 5.500z" fill="#9ce6ef"/><path d="M8 5.500L16 3v10l-8 3z" fill="#1391aa"/>',
  film: '<path d="M1 1h14v14H1z" fill="#333"/><path d="M4 2h8v12H4z" fill="#3b78c8"/><path d="M4 5l4 3 4-2v3l-8 2z" fill="#f1a62c"/><path d="M2.500 1v14M13.500 1v14" stroke="#ddd" stroke-dasharray="1 1.500"/>',
  win: '<path d="M0 2h3v3H0zM4 2h3v3H4zM0 6h3v3H0zM4 6h3v3H4z" fill="#00adef"/><path d="M4 9h9l2 2H2z" fill="#c9cdd0"/><path d="M2 11h13v4H2z" fill="#444"/><path d="M11 13h2" stroke="#4f4"/>',
  disk: '<path d="M4 7h9l2 3H1z" fill="#d3d6d8"/><path d="M1 10h14v5H1z" fill="#444"/><path d="M11 12.500h2" stroke="#4f4"/>',
  net: '<circle cx="10.500" cy="5.500" r="5.300" fill="#4b96c6"/><path d="M6 3q4 2 9 0M10 1q3 4 0 9" stroke="#b9e2f7" fill="none"/><path d="M.5 6.500h11v7H.5z" fill="#56bdf7" stroke="#31709b"/><path d="M4 15.500h5" stroke="#999"/>'
};
const nodes = [["star", "Acceso rápido", "top"], ["cloud", "OneDrive", "top"], ["pc", "Este equipo", "top flush"], ["down", "Descargas"], ["doc", "Documentos"], ["desk", "Escritorio"], ["img", "Imágenes"], ["music", "Música"], ["cube", "Objetos 3D"], ["film", "Vídeos"], ["win", "Windows (C:)", "sel"], ["disk", "Datos (J:)"], ["net", "Red", "top last"]];
document.getElementById("tree").innerHTML = nodes.map(([k, t, c = ""]) => `<div class="${c}"><svg width="16" height="16" viewBox="0 0 16 16">${icons[k]}</svg>${t}</div>`).join("");
```
